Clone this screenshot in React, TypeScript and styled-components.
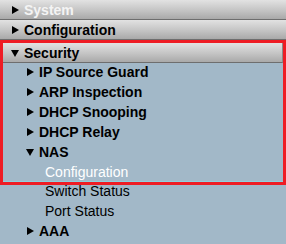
import React, { FC } from "react";
import styled, { createGlobalStyle } from "styled-components";

const GlobalStyle = createGlobalStyle`
  body {
    margin: 0;
    background: #a2b8c8;
    font-family: "Liberation Sans", Arial, sans-serif;
  }
`;

type Node = {
  label: string;
  open?: boolean;
  selected?: boolean;
};

const Arrow: FC<{ open?: boolean }> = ({ open }) =>
  open ? (
    <svg width="8" height="8" viewBox="0 0 8 8">
      <polygon points="0,1 8,1 4,8" fill="#000" />
    </svg>
  ) : (
    <svg width="8" height="8" viewBox="0 0 8 8">
      <polygon points="1,0 8,4 1,8" fill="#000" />
    </svg>
  );

const securityItems: Node[] = [
  { label: "IP Source Guard" },
  { label: "ARP Inspection" },
  { label: "DHCP Snooping" },
  { label: "DHCP Relay" },
  { label: "NAS", open: true },
];

const nasItems: Node[] = [
  { label: "Configuration", selected: true },
  { label: "Switch Status" },
  { label: "Port Status" },
];

const Menu: FC = () => (
  <Nav>
    <Header $dim>
      <ArrowBox>
        <Arrow />
      </ArrowBox>
      System
    </Header>
    <Header>
      <ArrowBox>
        <Arrow />
      </ArrowBox>
      Configuration
    </Header>
    {/* red frame around the current section */}
    <Highlight>
      <Header $inner>
        <ArrowBox>
          <Arrow open />
        </ArrowBox>
        Security
      </Header>
      {securityItems.map((item) => (
        <Item key={item.label}>
          <ArrowBox>
            <Arrow open={item.open} />
          </ArrowBox>
          {item.label}
        </Item>
      ))}
      <Leaf $selected>{nasItems[0].label}</Leaf>
    </Highlight>
    {nasItems.slice(1).map((item) => (
      <Leaf key={item.label}>{item.label}</Leaf>
    ))}
    <Item $outside>
      <ArrowBox>
        <Arrow />
      </ArrowBox>
      AAA
    </Item>
  </Nav>
);

const Nav = styled.nav`
  width: 286px;
  min-height: 244px;
  background: #a2b8c8;
  display: flex;
  flex-direction: column;
`;

const Header = styled.div<{ $dim?: boolean; $inner?: boolean }>`
  height: 19px;
  border-bottom: 1px solid #6e6e6e;
  ${(p) => (p.$inner ? "border-right: 1px solid #8a8a8a;" : "")}
  background: linear-gradient(#e2e2e2, #c4c4c4 55%, #a9a9a9);
  display: flex;
  align-items: center;
  padding-left: ${(p) => (p.$inner ? "8px" : "11px")};
  font-size: 14px;
  font-weight: bold;
  color: ${(p) => (p.$dim ? "#f4f4f4" : "#000")};
`;

const ArrowBox = styled.span`
  width: 13px;
  display: flex;
  align-items: center;
`;

const Highlight = styled.div`
  border: 3px solid #ee1c24;
  margin-bottom: -3px;
  display: flex;
  flex-direction: column;
  background: #a2b8c8;
  box-shadow: inset 0 -1px 0 #8fd0dc;
`;

const Item = styled.div<{ $outside?: boolean }>`
  height: 18px;
  padding-bottom: 2px;
  display: flex;
  align-items: center;
  padding-left: ${(p) => (p.$outside ? "26px" : "23px")};
  font-size: 14px;
  font-weight: bold;
  color: #000;
`;

const Leaf = styled.div<{ $selected?: boolean }>`
  height: ${(p) => (p.$selected ? "17px" : "18px")};
  padding-bottom: 2px;
  display: flex;
  align-items: center;
  padding-left: ${(p) => (p.$selected ? "42px" : "45px")};
  font-size: 14px;
  color: ${(p) => (p.$selected ? "#fff" : "#000")};
`;

const App: FC = () => (
  <>
    <GlobalStyle />
    <Menu />
  </>
);

export default App;
